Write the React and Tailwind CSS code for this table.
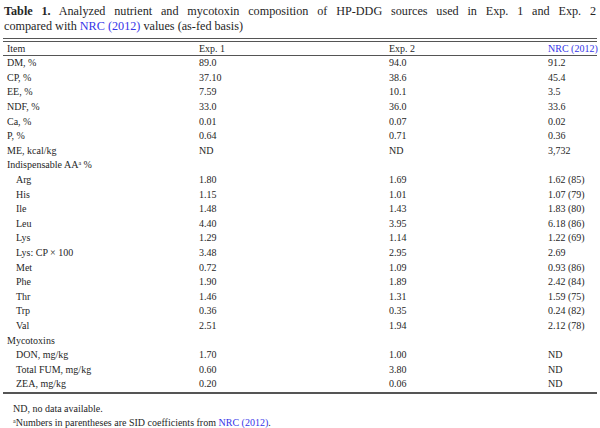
import React from "react";

const NRC = ({ children }) => <span className="text-[#3535e8]">{children}</span>;

const rows = [
  ["DM, %", "89.0", "94.0", "91.2", 0],
  ["CP, %", "37.10", "38.6", "45.4", 0],
  ["EE, %", "7.59", "10.1", "3.5", 0],
  ["NDF, %", "33.0", "36.0", "33.6", 0],
  ["Ca, %", "0.01", "0.07", "0.02", 0],
  ["P, %", "0.64", "0.71", "0.36", 0],
  ["ME, kcal/kg", "ND", "ND", "3,732", 0],
  ["AA", "", "", "", 0],
  ["Arg", "1.80", "1.69", "1.62 (85)", 1],
  ["His", "1.15", "1.01", "1.07 (79)", 1],
  ["Ile", "1.48", "1.43", "1.83 (80)", 1],
  ["Leu", "4.40", "3.95", "6.18 (86)", 1],
  ["Lys", "1.29", "1.14", "1.22 (69)", 1],
  ["Lys: CP × 100", "3.48", "2.95", "2.69", 1],
  ["Met", "0.72", "1.09", "0.93 (86)", 1],
  ["Phe", "1.90", "1.89", "2.42 (84)", 1],
  ["Thr", "1.46", "1.31", "1.59 (75)", 1],
  ["Trp", "0.36", "0.35", "0.24 (82)", 1],
  ["Val", "2.51", "1.94", "2.12 (78)", 1],
  ["Mycotoxins", "", "", "", 0],
  ["DON, mg/kg", "1.70", "1.00", "ND", 1],
  ["Total FUM, mg/kg", "0.60", "3.80", "ND", 1],
  ["ZEA, mg/kg", "0.20", "0.06", "ND", 1],
];

const grid = "grid grid-cols-[192px_190px_159px_1fr] pl-[4px] whitespace-nowrap";

export default function App() {
  return (
    <div
      className="w-[600px] h-[428px] bg-white text-[#262626] overflow-hidden"
      style={{ fontFamily: '"Liberation Serif", "Times New Roman", serif' }}
    >
      <div className="px-[4px] pt-[4px] text-[12.2px] leading-[15px]">
        <div className="text-justify [text-align-last:justify] whitespace-nowrap">
          <span className="font-bold">Table 1.</span> Analyzed nutrient and mycotoxin composition of HP-DDG sources used in Exp. 1 and Exp. 2
        </div>
        <div>
          compared with <NRC>NRC (2012)</NRC> values (as-fed basis)
        </div>
      </div>
      <div className="mx-[3px] mt-[4px] text-[10px] leading-[12px]">
        <div className="border-t border-[#555] h-[3px]" />
        <div className="border-t border-[#555]" />
        <div className={`${grid} h-[13px] items-center`}>
          <div>Item</div>
          <div>Exp. 1</div>
          <div>Exp. 2</div>
          <div><NRC>NRC (2012)</NRC></div>
        </div>
        <div className="border-t border-[#555]" />
        {rows.map(([a, b, c, d, ind], i) => (
          <div key={i} className={`${grid} h-[14.6px] items-center`}>
            <div className={ind ? "pl-[9px]" : ""}>
              {a === "AA" ? (
                <>
                  Indispensable AA<span className="relative -top-[3px] text-[6px] leading-none">a</span> %
                </>
              ) : (
                a
              )}
            </div>
            <div>{b}</div>
            <div>{c}</div>
            <div>{d}</div>
          </div>
        ))}
        <div className="border-t-2 border-[#555]" />
      </div>
      <div className="pl-[13px] pt-[8px] text-[10px] leading-[14.5px]">
        <div>ND, no data available.</div>
        <div>
          <span className="relative -top-[3px] text-[6px] leading-none">a</span>Numbers in parentheses are SID coefficients from <NRC>NRC (2012)</NRC>.
        </div>
      </div>
    </div>
  );
}
